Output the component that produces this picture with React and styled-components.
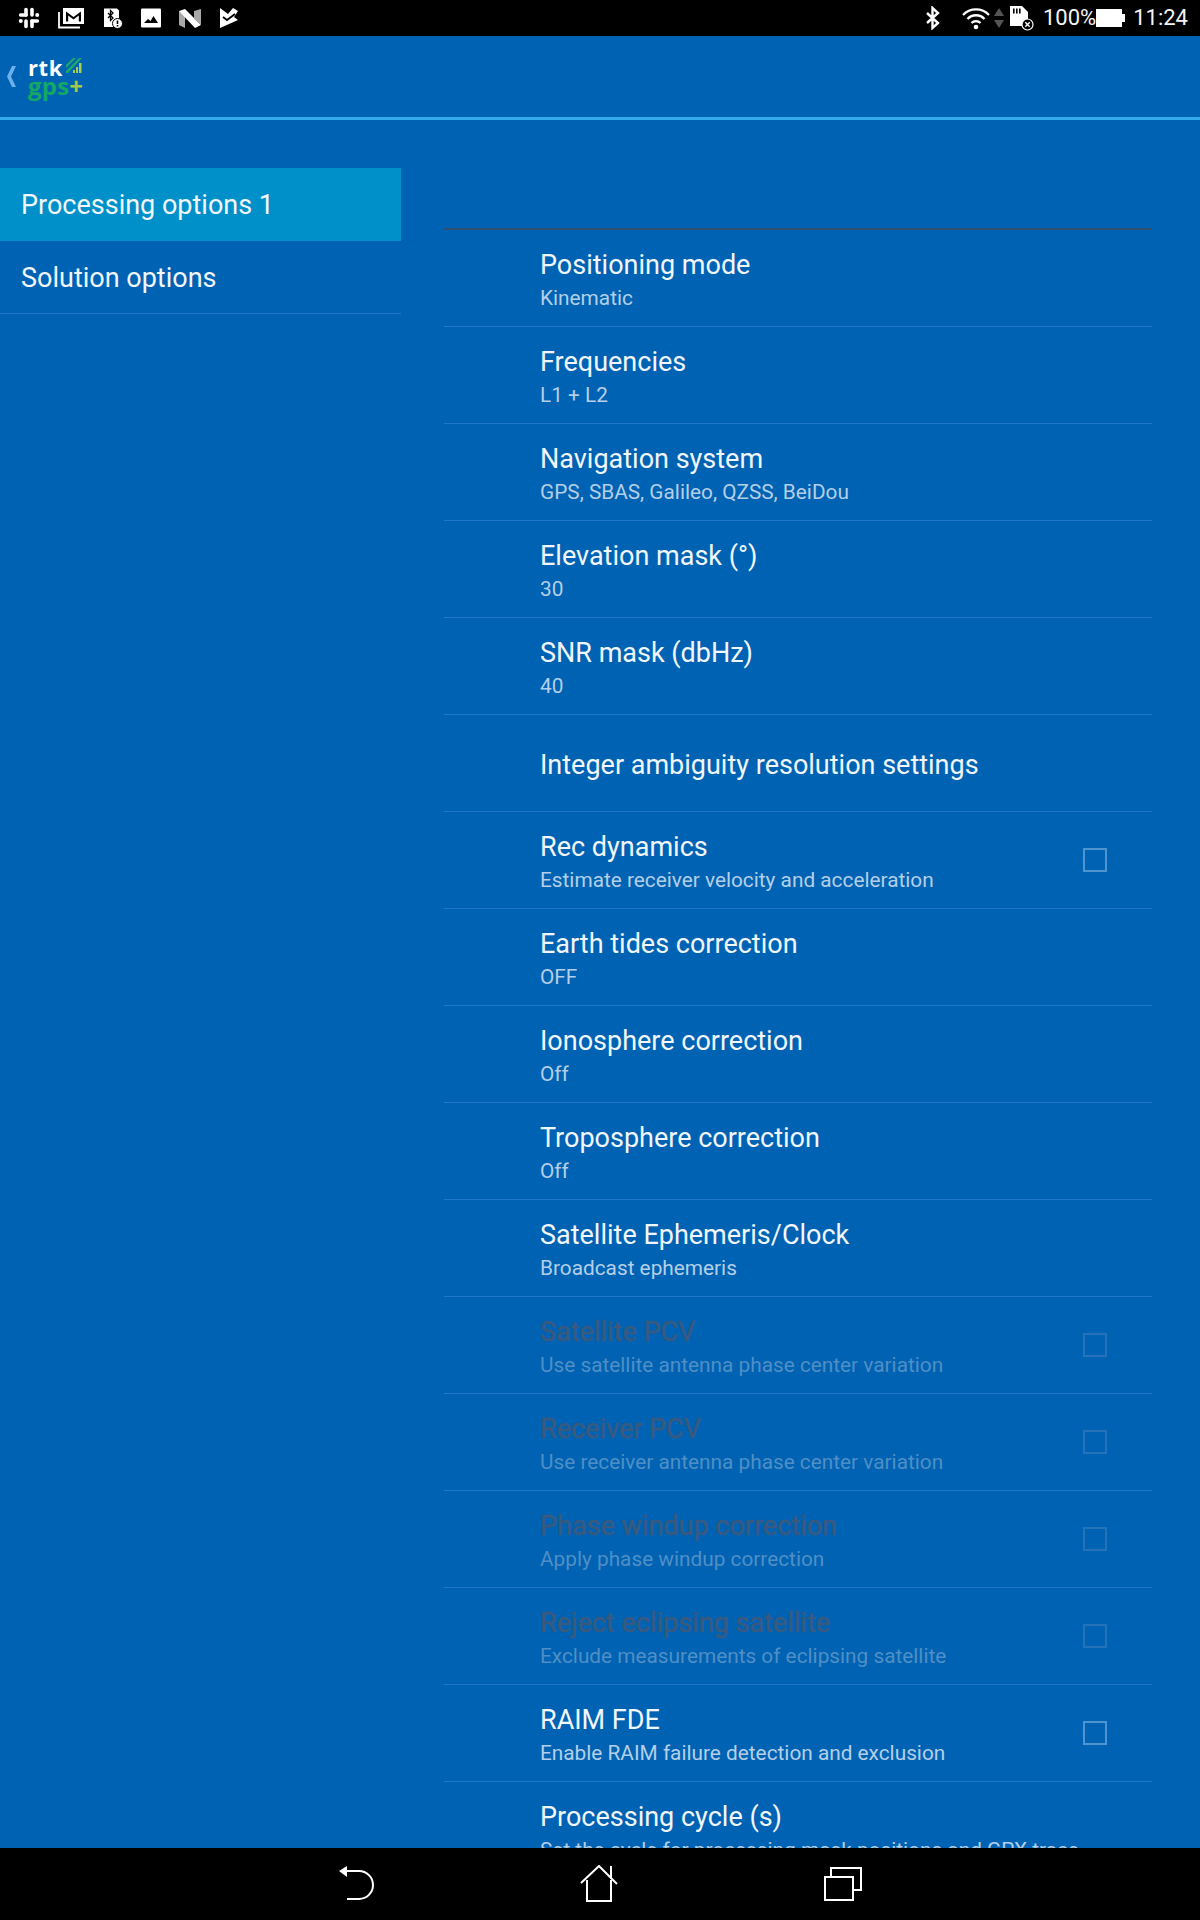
import React from "react";
import styled, { createGlobalStyle } from "styled-components";

const Global = createGlobalStyle`
  html, body { margin: 0; padding: 0; background: #000; }
  body { font-family: Roboto, "Liberation Sans", sans-serif; }
`;

const Screen = styled.div`
  width: 1200px; height: 1920px; display: flex; flex-direction: column; overflow: hidden; background: #0062b3;
`;
const StatusBar = styled.div`
  height: 36px; flex: none; background: #000; display: flex; align-items: center; justify-content: space-between; padding: 0 12px 0 18px; color: #fff;
`;
const StatusGroup = styled.div`
  display: flex; align-items: center; gap: ${p => p.$gap || 0}px; margin-left: ${p => p.$ml || 0}px;
`;
const StatusText = styled.span`
  font-size: 22px; color: #f4f4f4; line-height: 36px; margin: ${p => p.$m || 0};
`;
const AppBar = styled.header`
  height: 84px; flex: none; box-sizing: border-box; border-bottom: 3px solid #33aaec; display: flex; align-items: center; padding-left: 6px;
`;
const Logo = styled.div`
  position: relative; margin-left: 11px; width: 54px; height: 46px; font-family: "Open Sans", sans-serif; font-weight: 700;
`;
const LogoTop = styled.div`
  font-size: 22px; line-height: 20px; padding-top: 3px; color: #fff; letter-spacing: 0.6px;
`;
const LogoBottom = styled.div`
  font-size: 24px; line-height: 18px; color: #12a866; letter-spacing: 0.2px;
  span { color: #a3c94a; font-size: 24px; }
`;
const LogoBars = styled.svg`
  position: absolute; left: 38px; top: 4px;
`;
const Body = styled.main`
  flex: 1; min-height: 0; display: flex; overflow: hidden; padding-top: 48px;
`;
const Sidebar = styled.nav`
  width: 401px; flex: none; display: flex; flex-direction: column;
`;
const SideItem = styled.div`
  height: 73px; box-sizing: border-box; display: flex; align-items: center; padding: 1px 0 0 21px; font-size: 27px; color: #f1f7fc;
  background: ${p => (p.$active ? "#0090c9" : "transparent")};
  border-bottom: 1px solid ${p => (p.$active ? "transparent" : "#2079c8")};
`;
const ListPane = styled.section`
  margin-left: 43px; width: 708px; flex: none; padding-top: 60px;
`;
const HeadRule = styled.div`
  height: 2px; background: #2f4f73;
`;
const Row = styled.div`
  height: 97px; box-sizing: border-box; border-bottom: 1px solid #2079c8; display: flex; align-items: center; padding: 0 45px 0 96px;
`;
const RowText = styled.div`
  flex: 1; min-width: 0; display: flex; flex-direction: column; padding-top: 4px;
`;
const Title = styled.div`
  font-size: 27px; line-height: 34px; color: ${p => (p.$off ? "#385a80" : "#f1f7fc")}; white-space: nowrap;
  ${p => p.$off && "-webkit-text-stroke: 0.6px #385a80;"}
`;
const Sub = styled.div`
  font-size: 20.8px; line-height: 28px; margin-top: 2px; color: ${p => (p.$off ? "#4f8fc6" : "#b4cfe7")}; white-space: nowrap;
`;
const Check = styled.div`
  width: 24px; height: 24px; box-sizing: border-box; flex: none; border: 2px solid ${p => (p.$off ? "#2472b8" : "#4f93cf")};
`;
const NavBar = styled.footer`
  height: 72px; flex: none; background: #000; display: flex; align-items: center; position: relative; z-index: 1; padding-left: 338px; gap: 206px;
`;

const rows = [
  ["Positioning mode", "Kinematic"],
  ["Frequencies", "L1 + L2"],
  ["Navigation system", "GPS, SBAS, Galileo, QZSS, BeiDou"],
  ["Elevation mask (°)", "30"],
  ["SNR mask (dbHz)", "40"],
  ["Integer ambiguity resolution settings"],
  ["Rec dynamics", "Estimate receiver velocity and acceleration", "check"],
  ["Earth tides correction", "OFF"],
  ["Ionosphere correction", "Off"],
  ["Troposphere correction", "Off"],
  ["Satellite Ephemeris/Clock", "Broadcast ephemeris"],
  ["Satellite PCV", "Use satellite antenna phase center variation", "check", true],
  ["Receiver PCV", "Use receiver antenna phase center variation", "check", true],
  ["Phase windup correction", "Apply phase windup correction", "check", true],
  ["Reject eclipsing satellite", "Exclude measurements of eclipsing satellite", "check", true],
  ["RAIM FDE", "Enable RAIM failure detection and exclusion", "check"],
  ["Processing cycle (s)", "Set the cycle for processing mask positions and GPX trace"],
];

const Slack = () => (
  <svg width="22" height="22" viewBox="0 0 22 22" fill="#fff">
    <rect x="6.200" y="0.800" width="3.600" height="9" rx="1.800" />
    <rect x="0.800" y="6.200" width="9" height="3.600" rx="1.800" />
    <rect x="12.200" y="12.200" width="3.600" height="9" rx="1.800" />
    <rect x="12.200" y="12.200" width="9" height="3.600" rx="1.800" />
    <rect x="12.200" y="0.800" width="3.600" height="9" rx="1.800" />
    <circle cx="19.200" cy="8" r="2" />
    <rect x="6.200" y="12.200" width="3.600" height="9" rx="1.800" />
    <circle cx="2.800" cy="14" r="2" />
  </svg>
);
const Mail = () => (
  <svg width="27" height="22" viewBox="0 0 27 22">
    <path d="M1 5v15.500h21" fill="none" stroke="#fff" strokeWidth="1.800" />
    <path d="M5 1h21v16H5z" fill="#fff" />
    <path d="M8 14.500V4.500l7.500 5.500L23 4.500v10h-2.200V8.500L15.500 12.500 10.200 8.500v6z" fill="#000" />
  </svg>
);
const BtAlert = () => (
  <svg width="20" height="22" viewBox="0 0 20 22">
    <path d="M1 1.500h13l2 2V12h-5v8H1z" fill="#fff" />
    <path d="M5 6l5 5-2.500 2.500V3.500L10 6l-5 5" fill="none" stroke="#000" strokeWidth="1.300" />
    <circle cx="14.500" cy="16.500" r="5" fill="#fff" stroke="#000" strokeWidth="1" />
    <path d="M14.500 13.500v3.500M14.500 18v1.500" stroke="#000" strokeWidth="1.600" />
  </svg>
);
const Picture = () => (
  <svg width="20" height="20" viewBox="0 0 20 20">
    <rect width="20" height="19" y="0.500" rx="1" fill="#fff" />
    <path d="M3 15l4-4 2.500 2 3-5 4.500 7z" fill="#000" />
  </svg>
);
const NLogo = () => (
  <svg width="22" height="20" viewBox="0 0 22 20">
    <path d="M0 3l6 2v15l-6-3z" fill="#a8a8a8" />
    <path d="M0 3l6-2 16 16-6 3z" fill="#fff" />
    <path d="M15 3l7-2v16l-7-6z" fill="#a8a8a8" />
  </svg>
);
const Tick = () => (
  <svg width="20" height="22" viewBox="0 0 20 22">
    <path d="M1 1l8 6 5-6 5 3-4 6 4 3L1 21z" fill="#fff" />
    <path d="M4 10l4 3 8-6" fill="none" stroke="#000" strokeWidth="1.800" />
  </svg>
);
const Bluetooth = () => (
  <svg width="16" height="24" viewBox="0 0 16 24" fill="none" stroke="#fff" strokeWidth="2.400">
    <path d="M2 7l11 10-5.500 5V2L13 7 2 17" />
  </svg>
);
const Wifi = () => (
  <svg width="30" height="24" viewBox="0 0 30 24" fill="none" stroke="#fff" strokeWidth="2.300">
    <path d="M2 9c7-7.500 19-7.500 26 0M6.500 13c4.500-5 12.500-5 17 0M10.500 17c2.500-2.500 6.500-2.500 9 0" />
    <circle cx="15" cy="21" r="2.300" fill="#fff" stroke="none" />
  </svg>
);
const UpDown = () => (
  <svg width="10" height="24" viewBox="0 0 10 24" fill="#555">
    <path d="M5 2l5 8H0zM5 22l5-8H0z" />
  </svg>
);
const SdCard = () => (
  <svg width="26" height="26" viewBox="0 0 26 26">
    <path d="M1 1h12l6 6v14H1z" fill="#fff" />
    <path d="M4 3.500h1.600v5H4zM7 3.500h1.600v5H7zM10 3.500h1.600v5H10z" fill="#000" />
    <circle cx="18.500" cy="19.500" r="5.500" fill="#000" stroke="#fff" strokeWidth="1.200" />
    <path d="M16.300 17.300l4.400 4.400M20.700 17.300l-4.400 4.400" stroke="#fff" strokeWidth="1.400" />
  </svg>
);
const Battery = () => (
  <svg width="30" height="20" viewBox="0 0 30 20" fill="#fff">
    <path d="M0 1h26v5h3v8h-3v5H0z" />
  </svg>
);
const Chevron = () => (
  <svg width="11" height="21" viewBox="0 0 11 21" fill="#6cb0ec">
    <path d="M6 0h4L5 10.500l5 10.500H6L1 10.500z" />
  </svg>
);
const Bars = () => (
  <LogoBars width="16" height="16" viewBox="0 0 16 16">
    <path d="M0 7L7 0h3L0 10zM0 13L13 0h3L2 15H0z" fill="#1aa86d" />
    <path d="M7 15v-3h2v3zM10 15V9h2v6zM13 15V5h2.500v10z" fill="#a8cf45" />
  </LogoBars>
);
const BackIcon = () => (
  <svg width="36" height="36" viewBox="0 0 36 36" fill="none" stroke="#fff" strokeWidth="2">
    <path d="M6 5h15a10.500 10.500 0 0 1 0 28H9" />
    <path d="M9 0v11L1 5z" fill="#fff" stroke="none" />
  </svg>
);
const HomeIcon = () => (
  <svg width="38" height="38" viewBox="0 0 38 38" fill="none" stroke="#fff" strokeWidth="2">
    <path d="M1 18L19 1l18 18M7 15v21h24V15M31 1v13" />
  </svg>
);
const RecentIcon = () => (
  <svg width="38" height="34" viewBox="0 0 38 34" fill="none" stroke="#fff" strokeWidth="2">
    <rect x="1" y="10" width="28" height="23" />
    <path d="M7 10V1h30v22h-8" />
  </svg>
);

export default function App() {
  return (
    <Screen>
      <Global />
      <StatusBar>
        <StatusGroup $gap={18}>
          <Slack /><Mail /><BtAlert /><Picture /><NLogo /><Tick />
        </StatusGroup>
        <StatusGroup>
          <Bluetooth />
          <StatusGroup $gap={3} $ml={20}><Wifi /><UpDown /></StatusGroup>
          <StatusGroup $ml={5}><SdCard /></StatusGroup>
          <StatusText $m="0 0 0 8px">100%</StatusText>
          <Battery />
          <StatusText $m="0 0 0 7px">11:24</StatusText>
        </StatusGroup>
      </StatusBar>
      <AppBar>
        <Chevron />
        <Logo>
          <LogoTop>rtk</LogoTop>
          <LogoBottom>gps<span>+</span></LogoBottom>
          <Bars />
        </Logo>
      </AppBar>
      <Body>
        <Sidebar>
          <SideItem $active>Processing options 1</SideItem>
          <SideItem>Solution options</SideItem>
        </Sidebar>
        <ListPane>
          <HeadRule />
          {rows.map(([t, s, c, off]) => (
            <Row key={t}>
              <RowText>
                <Title $off={off}>{t}</Title>
                {s && <Sub $off={off}>{s}</Sub>}
              </RowText>
              {c && <Check $off={off} />}
            </Row>
          ))}
        </ListPane>
      </Body>
      <NavBar>
        <BackIcon /><HomeIcon /><RecentIcon />
      </NavBar>
    </Screen>
  );
}
